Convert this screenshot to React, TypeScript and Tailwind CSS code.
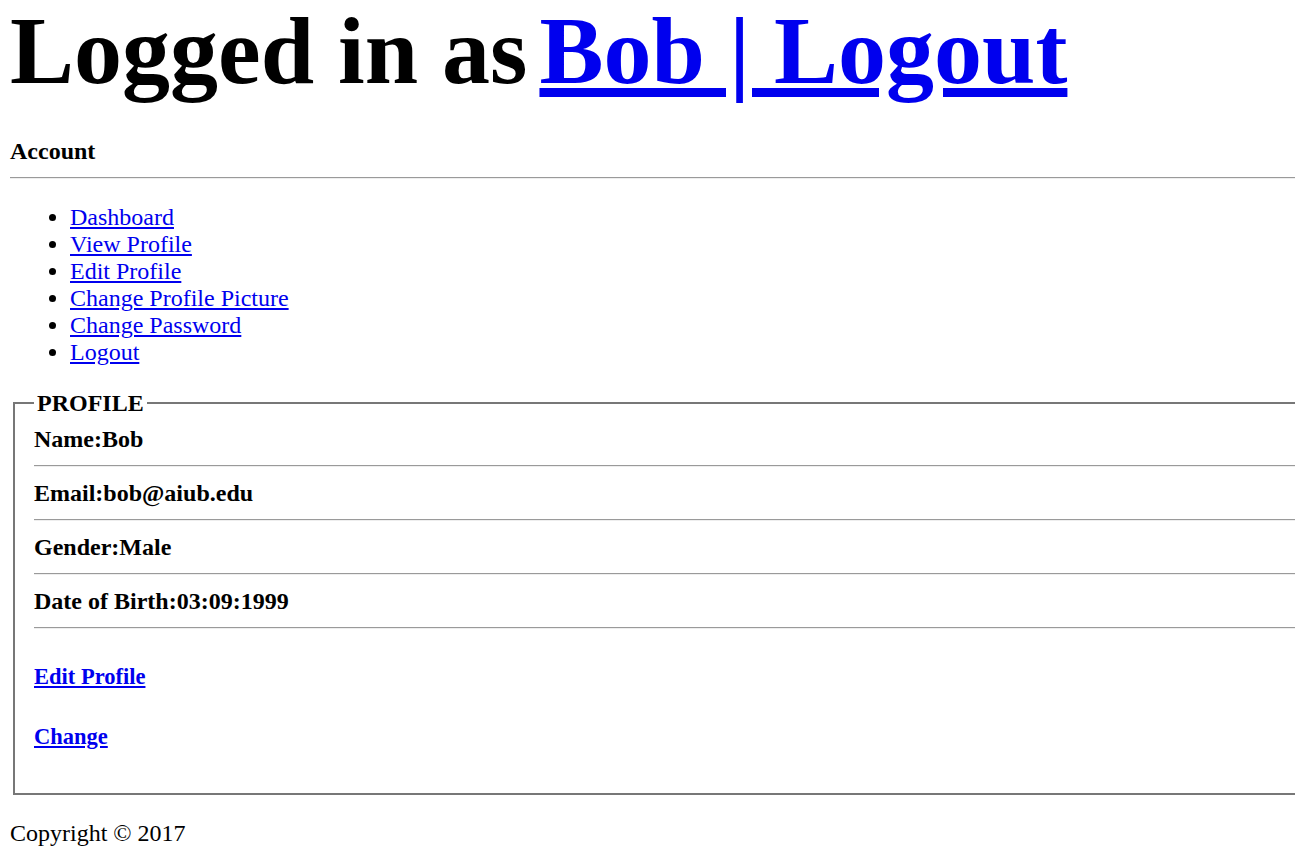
export default function App() {
  const nav = [
    "Dashboard",
    "View Profile",
    "Edit Profile",
    "Change Profile Picture",
    "Change Password",
    "Logout",
  ];

  const fields = [
    ["Name", "Bob"],
    ["Email", "bob@aiub.edu"],
    ["Gender", "Male"],
    ["Date of Birth", "03:09:1999"],
  ];

  return (
    <div className="w-[1295px] overflow-hidden bg-white text-black font-['Liberation_Serif',serif]">
      <div className="w-[1330px] pl-[10px]">
        <h1 className="text-[96px] leading-[102px] font-bold whitespace-nowrap">
          Logged in as
          <a href="#" className="ml-[12px] text-[#0000ee] underline">
            Bob | Logout
          </a>
        </h1>

        <h3 className="mt-[36px] text-[24px] leading-[27px] font-bold">Account</h3>
        <div className="mt-[12px] border-t border-b border-t-[#9a9a9a] border-b-[#eeeeee]" />

        <ul className="mt-[25px] list-disc pl-[60px] text-[24px] leading-[27px]">
          {nav.map((item) => (
            <li key={item}>
              <a href="#" className="text-[#0000ee] underline">
                {item}
              </a>
            </li>
          ))}
        </ul>

        <fieldset className="mt-[23px] ml-[3px] border-2 border-[#777777] pl-[19px] pr-[18px] pt-[8px] pb-[42px] text-[24px] leading-[28px] font-bold">
          <legend className="px-[3px] leading-[28px]">PROFILE</legend>
          {fields.map(([label, value]) => (
            <div key={label}>
              <div>
                {label}:{value}
              </div>
              <div className="my-[12px] border-t border-b border-t-[#9a9a9a] border-b-[#eeeeee]" />
            </div>
          ))}
          <div className="mt-[34px] text-[22.5px]">
            <a href="#" className="text-[#0000ee] underline">
              Edit Profile
            </a>
          </div>
          <div className="mt-[32px] text-[22.5px]">
            <a href="#" className="text-[#0000ee] underline">
              Change
            </a>
          </div>
        </fieldset>

        <footer className="mt-[25px] text-[24px] leading-[27px]">Copyright © 2017</footer>
      </div>
    </div>
  );
}
